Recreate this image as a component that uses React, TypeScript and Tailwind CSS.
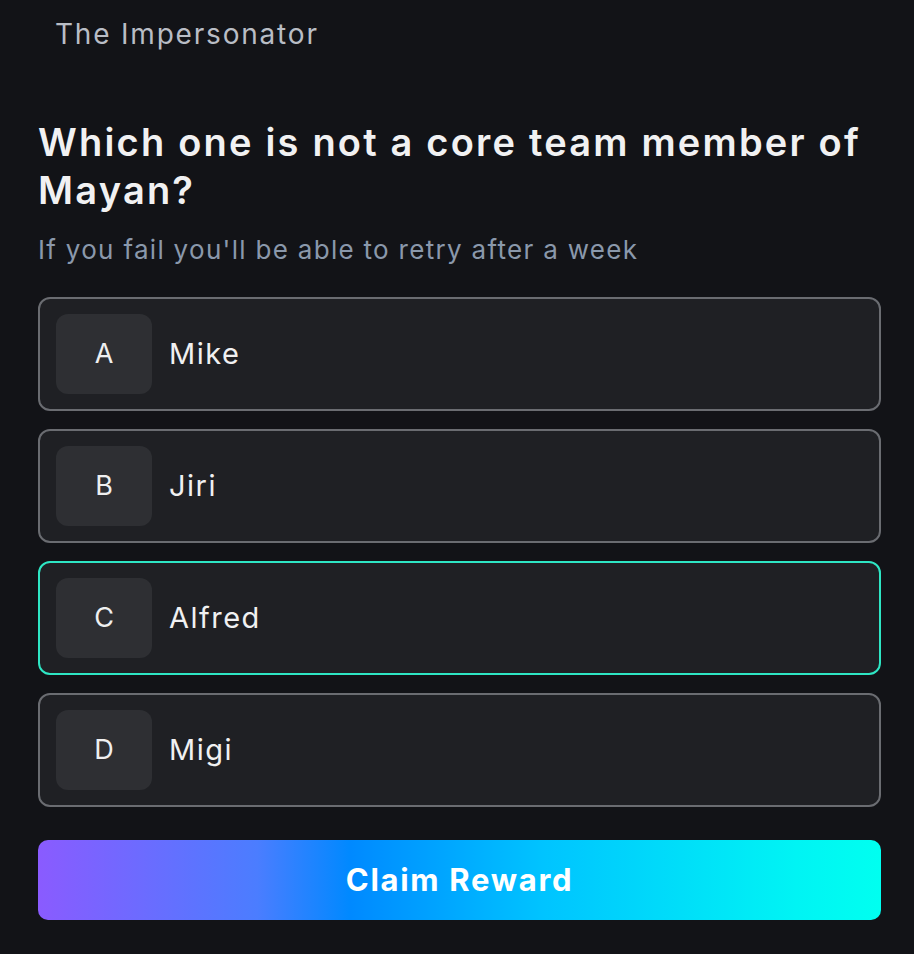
const options = [
  { key: "A", label: "Mike" },
  { key: "B", label: "Jiri" },
  { key: "C", label: "Alfred" },
  { key: "D", label: "Migi" },
];

export default function App() {
  const selected = "C";
  return (
    <div
      style={{ fontFamily: "Inter, 'Noto Sans', sans-serif" }}
      className="min-h-screen w-full bg-[#121317] pt-[13px] pl-[38px] pr-[33px]"
    >
      <p className="pl-[17px] text-[28px] leading-[42px] tracking-[1.8px] text-[#b9bdc5]">The Impersonator</p>

      <h1 className="mt-[63px] text-[38px] leading-[48px] font-semibold tracking-[2.2px] text-[#f1f1f2]">
        Which one is not a core team member of Mayan?
      </h1>
      <p className="mt-[18px] text-[26px] leading-[36px] tracking-[1.3px] text-[#8a98ab]">
        If you fail you'll be able to retry after a week
      </p>

      <div className="mt-[29px] flex flex-col gap-[18px]">
        {options.map((o) => (
          <button
            key={o.key}
            className={
              "flex h-[114px] items-center gap-[17px] rounded-[12px] border-2 bg-[#1f2024] px-[16px] text-left " +
              (o.key === selected ? "border-[#2ee6c4]" : "border-[#6a6c71]")
            }
          >
            <span className="flex h-[80px] w-[96px] items-center justify-center rounded-[12px] bg-[#2e2f33] text-[27px] text-[#efeff0]">
              {o.key}
            </span>
            <span className="text-[29px] tracking-[1.5px] text-[#f0f0f1]">{o.label}</span>
          </button>
        ))}
      </div>

      <button className="mt-[33px] flex h-[80px] w-full items-center justify-center rounded-[10px] bg-[linear-gradient(90deg,#8a5bff_0%,#4b7dff_26%,#0089ff_37%,#00c4ff_60%,#00f4f4_90%,#00fff0_100%)] text-[31px] font-bold tracking-[1.7px] text-white">
        Claim Reward
      </button>
    </div>
  );
}
